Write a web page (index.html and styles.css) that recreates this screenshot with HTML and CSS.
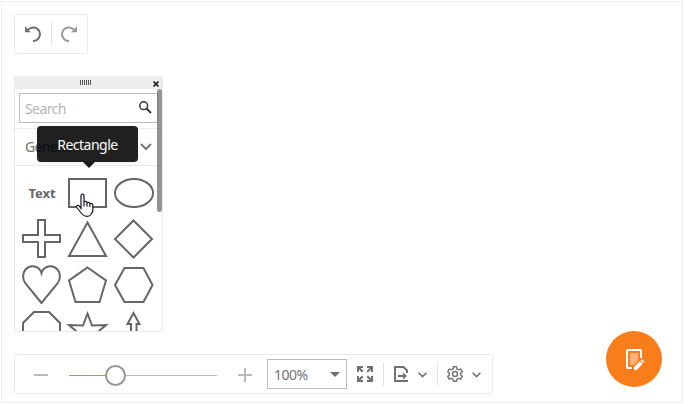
FILE: index.html
```html
<!DOCTYPE html>
<html lang="en">
<head>
<meta charset="utf-8">
<title>Diagram</title>
<link rel="stylesheet" href="styles.css">
</head>
<body>
<main class="diagram">
  <div class="toolbar history">
    <button class="tool" aria-label="Undo"><svg width="16" height="16" viewBox="0 0 16 16"><path d="M3 3.700A6.800 6.800 0 1 1 8 15" fill="none" stroke="#707070" stroke-width="2"/><path d="M0 .3v5.900h5.900z" fill="#707070"/></svg></button>
    <span class="divider"></span>
    <button class="tool" aria-label="Redo"><svg width="16" height="16" viewBox="0 0 16 16"><path d="M13 3.700A6.800 6.800 0 1 0 8 15" fill="none" stroke="#999" stroke-width="2"/><path d="M16 .3v5.900h-5.900z" fill="#999"/></svg></button>
  </div>

  <section class="toolbox">
    <header class="grip">
      <svg class="dots" width="12" height="5"><path d="M.5 0v5M2.500 0v5M4.500 0v5M6.500 0v5M8.500 0v5M10.500 0v5" stroke="#555" stroke-width="1"/></svg>
      <svg class="close" width="6" height="6" viewBox="0 0 6 6"><path d="M.5.5l5 5M5.500.5l-5 5" stroke="#222" stroke-width="1.600"/></svg>
    </header>
    <div class="search"><span>Search</span><svg width="13" height="13" viewBox="0 0 13 13" fill="none" stroke="#333"><circle cx="4.700" cy="4.700" r="3.900" stroke-width="1.500"/><path d="M7.500 7.500l4.500 4.500" stroke-width="1.800"/></svg></div>
    <div class="group"><span>General</span><svg width="12" height="8" viewBox="0 0 12 8"><path d="M1 1l5 5 5-5" fill="none" stroke="#777" stroke-width="2"/></svg></div>
    <div class="shapes">
      <div class="text-shape">Text</div>
      <svg viewBox="0 0 46 46"><rect x="4" y="9" width="37" height="28"/></svg>
      <svg viewBox="0 0 46 46"><ellipse cx="23" cy="23" rx="19" ry="14"/></svg>
      <svg viewBox="0 0 46 46"><path d="M19 4h7v15h15v7H26v15h-7V26H4v-7h15z"/></svg>
      <svg viewBox="0 0 46 46"><path d="M22.500 6.500L41 40H4z"/></svg>
      <svg viewBox="0 0 46 46"><path d="M22.500 4.500L41 23 22.500 41.500 4 23z"/></svg>
      <svg viewBox="0 0 46 46"><path d="M22.500 41L6.500 21.500C3 17 3.500 11 6.500 7.500C11.500 2 20.500 4 22.500 11C24.500 4 33.500 2 38.500 7.500C41.500 11 42 17 38.500 21.500z"/></svg>
      <svg viewBox="0 0 46 46"><path d="M22.500 5.500L41 18.500 34.500 40h-24L4 18.500z"/></svg>
      <svg viewBox="0 0 46 46"><path d="M13.500 6h19l9 17-9 17h-19L4 23z"/></svg>
      <svg viewBox="0 0 46 46"><path d="M15 4h15l11 11v15L30 41H15L4 30V15z"/></svg>
      <svg viewBox="0 0 46 46"><path d="M22.500 5.500l4.500 12 14-.5-10.500 9 3.500 14-11.500-8-11.500 8 3.500-14L4 17l14 .5z"/></svg>
      <svg viewBox="0 0 46 46"><path d="M22.500 5L28.500 16H25.500V41h-5.500V16h-3.500z"/></svg>
    </div>
    <div class="scrollbar"></div>
  </section>

  <div class="tooltip">Rectangle</div>
  <svg class="cursor" width="20" height="25" viewBox="0 0 20 25"><path d="M6 15.500V3c0-2.500 3-2.500 3 0v6c.8-1.200 3-.8 3 .8 1-1 2.700-.4 2.800 1 1.200-.8 3-.2 3 1.300V18l-1.800 3.500C14.500 24 9 24 7 21L1.800 14.500C.8 12.500 3.200 11.500 4.500 13.500zM9 8.500v5M12 9.800v3.700M14.800 11v3" fill="#fff" stroke="#15152b" stroke-width="1.200"/></svg>

  <div class="toolbar view">
    <button class="zoom-out" aria-label="Zoom out"></button>
    <div class="slider"><i class="filled"></i><i class="thumb"></i><i class="rest"></i></div>
    <svg class="plus" width="14" height="14"><path d="M0 7h14M7 0v14" stroke="#bababa" stroke-width="2"/></svg>
    <div class="select"><span>100%</span><svg width="10" height="5"><path d="M0 0h10L5 5z" fill="#6e6e6e"/></svg></div>
    <svg class="fit" width="16" height="16" viewBox="0 0 16 16" fill="#717171"><path id="corner" d="M0 0h6v2H3.500l3 3L5 6.500l-3-3V6H0z"/><use href="#corner" transform="translate(16) scale(-1 1)"/><use href="#corner" transform="translate(0 16) scale(1 -1)"/><use href="#corner" transform="translate(16 16) scale(-1)"/></svg>
    <span class="divider first"></span>
    <svg class="export" width="15" height="16" viewBox="0 0 15 16"><path d="M13 7V4.500L9.500 1H1v14h13" fill="none" stroke="#717171" stroke-width="2"/><path d="M4 9h5V6.500l4 3.500-4 3.500V11H4z" fill="#717171"/></svg>
    <svg class="chev" width="9" height="6" viewBox="0 0 9 6"><path d="M.6.7l3.900 3.900L8.400.7" fill="none" stroke="#717171" stroke-width="1.600"/></svg>
    <span class="divider second"></span>
    <svg class="gear" width="16" height="16" viewBox="0 0 16 16" fill="none" stroke="#777" stroke-width="1.500"><path d="M6.500.8h3l.5 2.100 1.600.9 2.100-.7 1.500 2.600-1.600 1.500v1.700l1.600 1.500-1.500 2.600-2.100-.7-1.600.9-.5 2.100h-3L6 13.200l-1.600-.9-2.100.7L.8 10.400l1.600-1.500V7.200L.8 5.700l1.500-2.600 2.100.7L6 2.900z"/><circle cx="8" cy="8" r="2.500"/></svg>
    <svg class="chev" width="9" height="6" viewBox="0 0 9 6"><path d="M.6.7l3.900 3.900L8.400.7" fill="none" stroke="#717171" stroke-width="1.600"/></svg>
  </div>

  <button class="properties" aria-label="Properties"><svg width="19" height="22" viewBox="0 0 19 22"><path d="M4 4h8v7.500L8 16H4z" fill="#fcb27a"/><path d="M15 9V2q0-1-1-1H2Q1 1 1 2v16q0 1 1 1h4" fill="none" stroke="#fff" stroke-width="2"/><path d="M8 18l5.800-5.800 2.800 2.800L10.800 21H8zM14.500 11.500l.7-.7q.7-.7 1.400 0l1.200 1.200q.7.700 0 1.400l-.7.700z" fill="#fff"/></svg></button>
</main>
</body>
</html>
```
FILE: styles.css
```css
* { box-sizing: border-box; }
body { margin: 0; background: #fff; color: #727272; font: 14px "Noto Sans", sans-serif; }
svg { display: block; flex: none; }
button { padding: 0; border: 0; background: none; }

.diagram {
  position: relative;
  display: flex;
  flex-direction: column;
  align-items: flex-start;
  width: 682px;
  height: 402px;
  margin: 1px;
  padding: 12px;
  border: 1px solid #ededed;
}

.toolbar {
  display: flex;
  flex: none;
  align-items: center;
  height: 40px;
  border: 1px solid #ebebeb;
  border-radius: 3px;
}
.divider { width: 1px; height: 24px; background: #e3e3e3; }

.history { width: 74px; }
.tool { display: flex; justify-content: center; width: 36px; }

.toolbox {
  position: relative;
  flex: none;
  width: 149px;
  height: 256px;
  margin-top: 22px;
  border: 1px solid #ebebeb;
  border-top: 0;
  overflow: hidden;
}
.grip {
  display: flex;
  align-items: center;
  justify-content: space-between;
  height: 13px;
  margin: 0 -1px;
  padding: 0 4px 0 66px;
  background: #eee;
}
.close { margin-top: 2px; }
.search {
  display: flex;
  align-items: center;
  justify-content: space-between;
  width: 139px;
  height: 30px;
  margin: 4px 0 0 4px;
  padding: 0 5px;
  border: 1px solid #bcbcbc;
  color: #b5b5b5;
  letter-spacing: -.6px;
}
.search svg { margin-top: -1px; }
.group {
  display: flex;
  align-items: center;
  justify-content: space-between;
  height: 38px;
  margin-top: 5px;
  padding: 0 10px;
  border-top: 1px solid #ebebeb;
  border-bottom: 1px solid #ebebeb;
  letter-spacing: -.6px;
}
.group span { margin-top: -2px; }
.shapes {
  display: grid;
  grid-template-columns: repeat(3, 46px);
  grid-auto-rows: 46px;
  padding: 4px 0 0 4px;
}
.shapes svg { width: 46px; height: 46px; fill: #fff; stroke: #666; stroke-width: 2; }
.text-shape { display: grid; place-items: center; font-weight: 700; font-size: 13px; color: #666; }
.scrollbar {
  position: absolute;
  top: 13px;
  right: 0;
  width: 5px;
  height: 123px;
  border-radius: 3px;
  background: rgba(90, 90, 90, .65);
}

.tooltip {
  position: absolute;
  left: 35px;
  top: 124px;
  width: 101px;
  height: 36px;
  border-radius: 4px;
  background: rgba(0, 0, 0, .87);
  box-shadow: 0 2px 5px rgba(0, 0, 0, .06);
  color: #fff;
  line-height: 38px;
  text-align: center;
  letter-spacing: -.5px;
}
.tooltip::after {
  content: "";
  position: absolute;
  left: 46px;
  top: 36px;
  border: 6px solid transparent;
  border-top-color: #181818;
  border-bottom: 0;
}
.cursor { position: absolute; left: 73px; top: 191px; }

.view { width: 479px; margin-top: 22px; padding-left: 19px; }
.zoom-out { width: 14px; height: 2px; margin-top: 1px; background: #bababa; }
.slider { display: flex; align-items: center; width: 148px; height: 21px; margin: 2px 21px 0; }
.filled { width: 36px; height: 1px; background: #f97e1b; }
.thumb { width: 21px; height: 21px; border: 2px solid #979797; border-radius: 50%; background: #fff; }
.rest { width: 91px; height: 1px; background: #bababa; }
.plus { margin-top: 2px; }
.select {
  display: flex;
  align-items: center;
  justify-content: space-between;
  width: 80px;
  height: 30px;
  margin: 0 10px 0 15px;
  padding: 0 6px;
  border: 1px solid #bcbcbc;
  letter-spacing: -.5px;
}
.first { margin: 0 10px; }
.chev { margin: 1px 0 0 9px; }
.second { margin: 0 9px 0 10px; }

.properties {
  position: absolute;
  right: 20px;
  bottom: 15px;
  display: grid;
  place-content: start;
  width: 56px;
  height: 56px;
  padding: 18px 0 0 20px;
  border-radius: 50%;
  background: #f97e1b;
}
```
